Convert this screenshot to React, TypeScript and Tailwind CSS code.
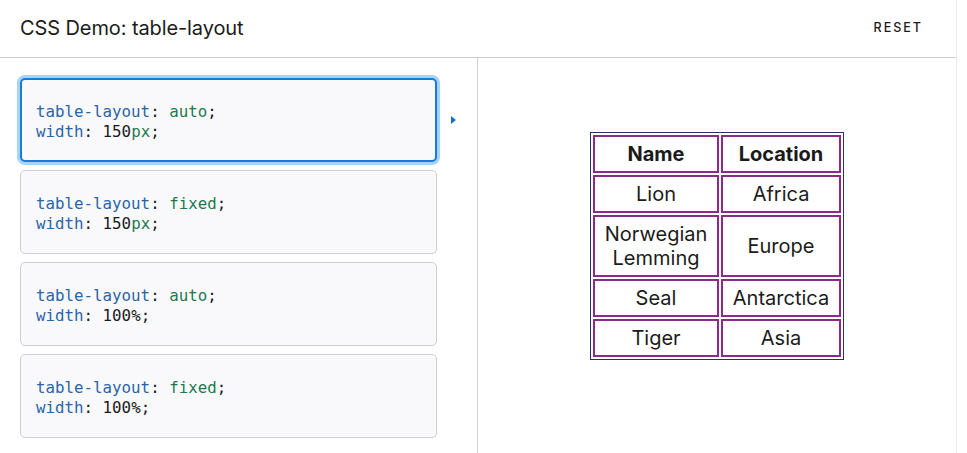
const examples = [
  { layout: 'auto', width: '150', unit: 'px', selected: true },
  { layout: 'fixed', width: '150', unit: 'px', selected: false },
  { layout: 'auto', width: '100', unit: '%', selected: false },
  { layout: 'fixed', width: '100', unit: '%', selected: false },
];

const rows = [
  ['Lion', 'Africa'],
  ['Norwegian Lemming', 'Europe'],
  ['Seal', 'Antarctica'],
  ['Tiger', 'Asia'],
];

function CodeCard({ layout, width, unit, selected }: (typeof examples)[number]) {
  return (
    <div className="relative">
      <div
        className={
          selected
            ? 'h-[84px] flex items-center rounded-[5px] border-2 border-[#1b7ad6] bg-[#f9f9fb] pl-[14px] pt-[4px] ring-[3px] ring-[#a6d4f7]'
            : 'h-[84px] flex items-center rounded-[5px] border border-[#cfcfcf] bg-[#f9f9fb] pl-[15px] pt-[4px]'
        }
      >
        <pre className="font-['DejaVu_Sans_Mono','Liberation_Mono',monospace] text-[15.8px] leading-[20px] text-[#1b1b1b]">
          <span className="text-[#2a64a8]">table-layout</span>: <span className="text-[#1d7a4e]">{layout}</span>;{'\n'}
          <span className="text-[#2a64a8]">width</span>: {width}
          {unit === 'px' ? <span className="text-[#1d7a4e]">px</span> : unit};
        </pre>
      </div>
      {selected && (
        <div className="absolute left-[431px] top-[38px] h-0 w-0 border-y-[4px] border-l-[5px] border-y-transparent border-l-[#1b72c8]" />
      )}
    </div>
  );
}

export default function App() {
  return (
    <div className="w-[957px] h-[453px] overflow-hidden border-r border-[#ececec] bg-white font-['Inter','Noto_Sans',sans-serif] text-[#1b1b1b]">
      <header className="h-[58px] flex items-center justify-between border-b border-[#cdcdcd] pl-5 pr-[33px]">
        <h1 className="text-[20px] leading-none tracking-[-0.1px] pb-[2px]">CSS Demo: table-layout</h1>
        <button className="text-[12.5px] font-medium tracking-[2px] text-[#1b1b1b]">RESET</button>
      </header>
      <div className="flex h-[395px]">
        <section className="w-[478px] shrink-0 border-r border-[#d4d4d4] pl-5 pr-[40px] pt-5 flex flex-col gap-2">
          {examples.map((ex) => (
            <CodeCard key={ex.layout + ex.width} {...ex} />
          ))}
        </section>
        <section className="flex-1 flex justify-center pt-[74px]">
          <div>
            <table className="border border-[#27306b] border-separate border-spacing-[2px] text-[20px] leading-[24px] text-center">
              <thead>
                <tr>
                  <th className="w-[126px] h-[38px] border-2 border-[#8c2a8c] px-[9px] font-bold">Name</th>
                  <th className="w-[120px] h-[38px] border-2 border-[#8c2a8c] px-[9px] font-bold">Location</th>
                </tr>
              </thead>
              <tbody>
                {rows.map(([name, loc]) => (
                  <tr key={name}>
                    <td className="h-[38px] border-2 border-[#8c2a8c] px-[9px] py-[5px]">{name}</td>
                    <td className="h-[38px] border-2 border-[#8c2a8c] px-[9px] py-[5px]">{loc}</td>
                  </tr>
                ))}
              </tbody>
            </table>
          </div>
        </section>
      </div>
    </div>
  );
}
